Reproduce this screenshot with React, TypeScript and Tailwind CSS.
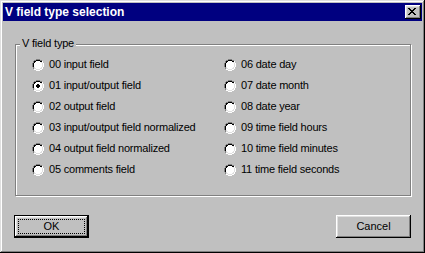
import React from "react";

const RADIO = [
  "....gggg....",
  "..ggkkkkgg..",
  ".gkkwwwwkkh.",
  ".gkwwwwwwlh.",
  "gkwwwwwwwwlh",
  "gkwwwwwwwwlh",
  "gkwwwwwwwwlh",
  "gkwwwwwwwwlh",
  ".glwwwwwwlh.",
  ".gllwwwwllh.",
  "..hhllllhh..",
  "....hhhh....",
];
const DOT = [".kk.", "kkkk", "kkkk", ".kk."];
const COLORS: Record<string, string> = {
  g: "#808080",
  k: "#000000",
  w: "#ffffff",
  l: "#dfdfdf",
  h: "#ffffff",
};

function Radio({ checked }: { checked?: boolean }) {
  const rects: React.ReactElement[] = [];
  RADIO.forEach((row, y) =>
    row.split("").forEach((c, x) => {
      if (c !== ".")
        rects.push(<rect key={`r${x}-${y}`} x={x} y={y} width={1} height={1} fill={COLORS[c]} />);
    })
  );
  if (checked)
    DOT.forEach((row, y) =>
      row.split("").forEach((c, x) => {
        if (c !== ".")
          rects.push(<rect key={`d${x}-${y}`} x={x + 4} y={y + 4} width={1} height={1} fill="#000" />);
      })
    );
  return (
    <svg width={12} height={12} viewBox="0 0 12 12" shapeRendering="crispEdges" className="shrink-0">
      {rects}
    </svg>
  );
}

const XMAP = ["kk....kk", ".kk..kk.", "..kkkk..", "...kk...", "..kkkk..", ".kk..kk.", "kk....kk"];

function CloseGlyph() {
  const rects: React.ReactElement[] = [];
  XMAP.forEach((row, y) =>
    row.split("").forEach((c, x) => {
      if (c !== ".") rects.push(<rect key={`${x}-${y}`} x={x} y={y} width={1} height={1} fill="#000" />);
    })
  );
  return (
    <svg width={8} height={7} viewBox="0 0 8 7" shapeRendering="crispEdges">
      {rects}
    </svg>
  );
}

const left = [
  "00 input field",
  "01 input/output field",
  "02 output field",
  "03 input/output field normalized",
  "04 output field normalized",
  "05 comments field",
];
const right = [
  "06 date day",
  "07 date month",
  "08 date year",
  "09 time field hours",
  "10 time field minutes",
  "11 time field seconds",
];

function Row({ label, checked }: { label: string; checked?: boolean }) {
  return (
    <div className="h-[21px] flex items-center gap-[5px]">
      <Radio checked={checked} />
      <span className="leading-[13px] tracking-[-0.2px]">{label}</span>
    </div>
  );
}

export default function App() {
  return (
    <div className="w-[425px] h-[253px] bg-[#c0c0c0] p-[3px] flex flex-col text-[11px] text-black font-['Liberation_Sans',Arial,sans-serif] shadow-[inset_-1px_-1px_#000,inset_1px_1px_#dfdfdf,inset_-2px_-2px_#808080,inset_2px_2px_#fff]">
      <div className="h-[18px] bg-[#000080] flex items-center justify-between pl-[2px] pr-[1px]">
        <span className="text-white font-bold text-[12px] leading-[14px]">V field type selection</span>
        <div className="w-[16px] h-[14px] bg-[#c0c0c0] flex items-start justify-start pl-[3px] pt-[3px] shadow-[inset_-1px_-1px_#000,inset_1px_1px_#fff,inset_-2px_-2px_#808080,inset_2px_2px_#dfdfdf]">
          <CloseGlyph />
        </div>
      </div>
      <div className="flex flex-col pl-[11px]">
        <div className="relative ml-[1px] mt-[23px] w-[396px] h-[152px] border border-[#808080] shadow-[inset_1px_1px_#fff,1px_1px_#fff]">
          <span className="absolute left-[4px] top-[-8px] px-[2px] bg-[#c0c0c0] leading-[13px] tracking-[-0.2px]">V field type</span>
          <div className="flex pl-[16px] pt-[9px]">
            <div className="w-[192px] flex flex-col">
              {left.map((l, i) => (
                <Row key={l} label={l} checked={i === 1} />
              ))}
            </div>
            <div className="flex flex-col">
              {right.map((l) => (
                <Row key={l} label={l} />
              ))}
            </div>
          </div>
        </div>
        <div className="mt-[19px] w-[397px] flex justify-between">
          <div className="w-[75px] h-[23px] border border-black">
            <div className="relative w-full h-full flex items-center justify-center shadow-[inset_-1px_-1px_#000,inset_1px_1px_#fff,inset_-2px_-2px_#808080,inset_2px_2px_#dfdfdf]">
              <span className="leading-[13px]">OK</span>
              <div className="absolute inset-[3px] border border-dotted border-black" />
            </div>
          </div>
          <div className="w-[75px] h-[23px] flex items-center justify-center shadow-[inset_-1px_-1px_#000,inset_1px_1px_#fff,inset_-2px_-2px_#808080,inset_2px_2px_#dfdfdf]">
            <span className="leading-[13px]">Cancel</span>
          </div>
        </div>
      </div>
    </div>
  );
}
